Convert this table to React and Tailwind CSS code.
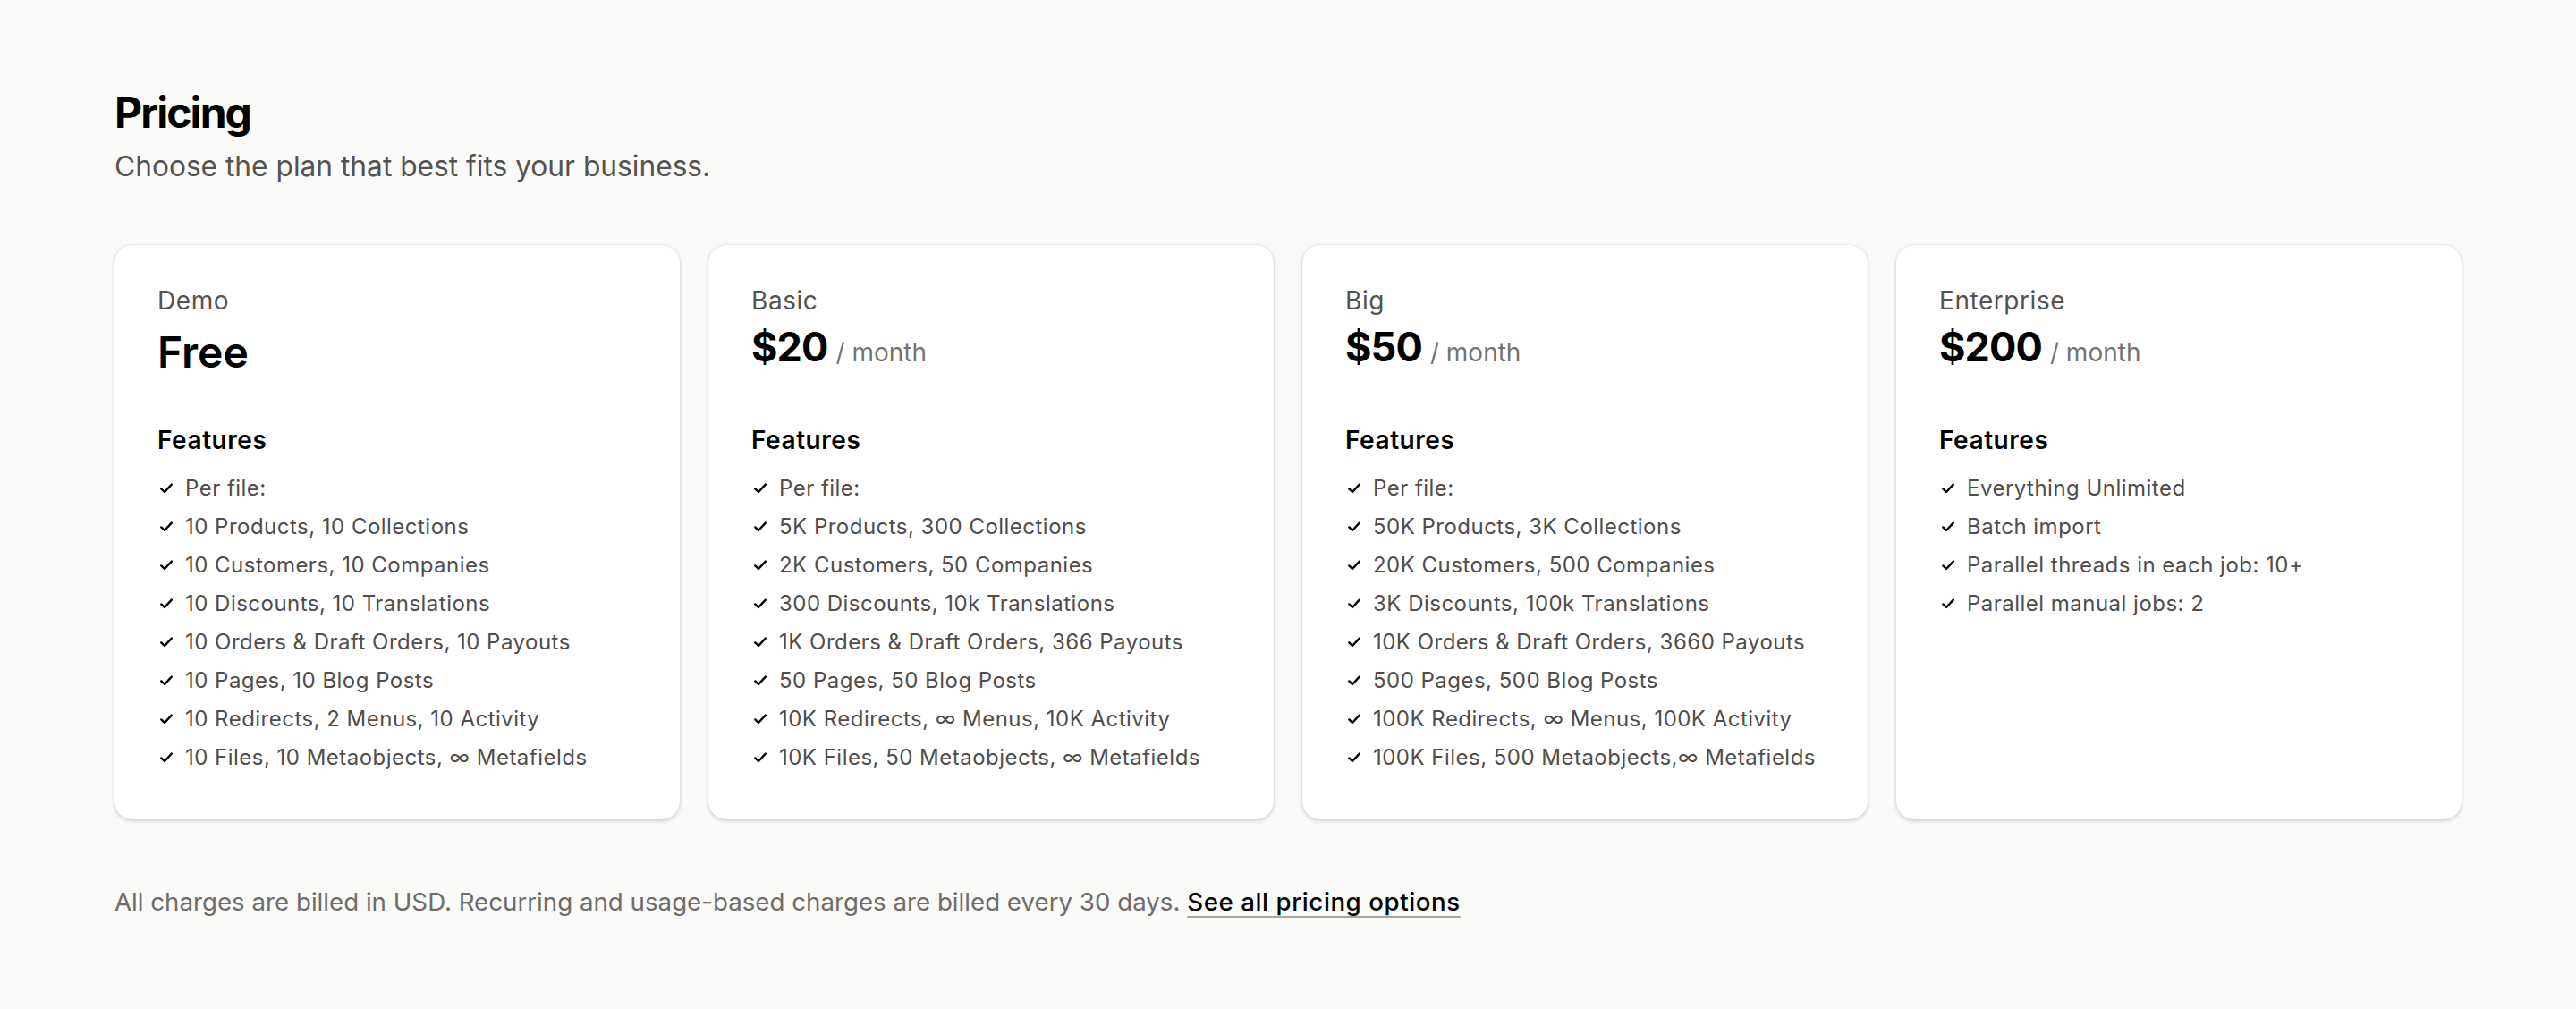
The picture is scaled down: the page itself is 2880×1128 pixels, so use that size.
import React from 'react';

const PLANS = [
  {
    name: 'Demo',
    price: 'Free',
    features: [
      'Per file:',
      '10 Products, 10 Collections',
      '10 Customers, 10 Companies',
      '10 Discounts, 10 Translations',
      '10 Orders & Draft Orders, 10 Payouts',
      '10 Pages, 10 Blog Posts',
      '10 Redirects, 2 Menus, 10 Activity',
      '10 Files, 10 Metaobjects, ∞ Metafields',
    ],
  },
  {
    name: 'Basic',
    price: '$20',
    monthly: true,
    features: [
      'Per file:',
      '5K Products, 300 Collections',
      '2K Customers, 50 Companies',
      '300 Discounts, 10k Translations',
      '1K Orders & Draft Orders, 366 Payouts',
      '50 Pages, 50 Blog Posts',
      '10K Redirects, ∞ Menus, 10K Activity',
      '10K Files, 50 Metaobjects, ∞ Metafields',
    ],
  },
  {
    name: 'Big',
    price: '$50',
    monthly: true,
    features: [
      'Per file:',
      '50K Products, 3K Collections',
      '20K Customers, 500 Companies',
      '3K Discounts, 100k Translations',
      '10K Orders & Draft Orders, 3660 Payouts',
      '500 Pages, 500 Blog Posts',
      '100K Redirects, ∞ Menus, 100K Activity',
      '100K Files, 500 Metaobjects,∞ Metafields',
    ],
  },
  {
    name: 'Enterprise',
    price: '$200',
    monthly: true,
    features: [
      'Everything Unlimited',
      'Batch import',
      'Parallel threads in each job: 10+',
      'Parallel manual jobs: 2',
    ],
  },
];

function Check() {
  return (
    <span className="flex w-[20px] h-[43px] items-center justify-center shrink-0">
      <svg width="14" height="12" viewBox="0 0 14 12" fill="none">
        <path d="M1.3 6.4 L5 10 L12.8 1.6" stroke="#000" strokeWidth="2.4" strokeLinecap="round" strokeLinejoin="round" />
      </svg>
    </span>
  );
}

function PlanCard({ plan }) {
  return (
    <div className="bg-white rounded-[20px] shadow-[0_2px_5px_rgba(0,0,0,0.16),0_0_2px_rgba(0,0,0,0.12)] px-[48px] pt-[42px] pb-[48px]">
      <div className="text-[28px] leading-[40px] tracking-[0.02em] text-[#55524f]">{plan.name}</div>
      {plan.monthly ? (
        <div className="mt-[4px] flex items-baseline h-[62px]">
          <span className="text-[45px] leading-[56px] font-bold text-black tracking-[-0.02em]">{plan.price}</span>
          <span className="ml-[9px] text-[28px] text-[#77736f]">/ month</span>
        </div>
      ) : (
        <div className="mt-[10px] h-[56px] text-[48px] leading-[56px] font-semibold text-black">{plan.price}</div>
      )}
      <h3 className="mt-[50px] text-[28px] leading-[40px] font-semibold tracking-[0.02em] text-black">Features</h3>
      <ul className="mt-[12px]">
        {plan.features.map((f) => (
          <li key={f} className="flex items-center gap-[11px] text-[24px] leading-[43px] tracking-[0.02em] text-[#504d4a]">
            <Check />
            <span>{f}</span>
          </li>
        ))}
      </ul>
    </div>
  );
}

export default function App() {
  return (
    <div className="min-h-screen bg-[#fafaf9] font-['Inter',sans-serif] px-[128px] pt-[98px] pb-[80px]">
      <h1 className="text-[48px] leading-[56px] font-bold text-black tracking-[-0.04em]">Pricing</h1>
      <p className="mt-[10px] text-[31.7px] leading-[44px] text-[#55524f]">
        Choose the plan that best fits your business.
      </p>

      <div className="mt-[66px] grid grid-cols-4 gap-[32px]">
        {PLANS.map((p) => (
          <PlanCard key={p.name} plan={p} />
        ))}
      </div>

      <p className="mt-[72px] text-[27.7px] leading-[40px] text-[#6f6c69]">
        All charges are billed in USD. Recurring and usage-based charges are billed every 30 days.{' '}
        <a href="#" className="text-black font-medium tracking-[0.02em] underline decoration-[#a8a4a0] decoration-2 underline-offset-[6px]">
          See all pricing options
        </a>
      </p>
    </div>
  );
}
